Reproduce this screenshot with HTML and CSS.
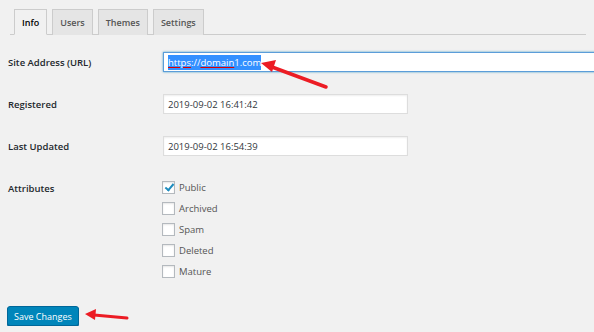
FILE: index.html
```html
<!DOCTYPE html>
<html lang="en">

<head>
    <meta charset="UTF-8">
    <title>Edit Site: Info</title>
    <link rel="stylesheet" href="styles.css">
</head>

<body>
    <div class="wrap">
        <h2 class="nav-tab-wrapper">
            <a class="nav-tab nav-tab-active" href="#">Info</a>
            <a class="nav-tab" href="#">Users</a>
            <a class="nav-tab" href="#">Themes</a>
            <a class="nav-tab" href="#">Settings</a>
        </h2>

        <div class="form-table">
            <div class="row">
                <div class="label">Site Address (URL)</div>
                <div class="field">
                    <div class="text-input wide focused"><span class="sel"><span class="typo">https</span>://<span class="typo">domain</span>1.com</span></div>
                </div>
            </div>
            <div class="row">
                <div class="label">Registered</div>
                <div class="field">
                    <div class="text-input">2019-09-02 16:41:42</div>
                </div>
            </div>
            <div class="row">
                <div class="label">Last Updated</div>
                <div class="field">
                    <div class="text-input">2019-09-02 16:54:39</div>
                </div>
            </div>
            <div class="row attributes">
                <div class="label">Attributes</div>
                <div class="field">
                    <label class="check"><span class="box checked"></span>Public</label>
                    <label class="check"><span class="box"></span>Archived</label>
                    <label class="check"><span class="box"></span>Spam</label>
                    <label class="check"><span class="box"></span>Deleted</label>
                    <label class="check"><span class="box"></span>Mature</label>
                </div>
            </div>
        </div>

        <p class="submit">
            <button class="button-primary">Save Changes</button>
        </p>
    </div>

    <!-- annotation arrows -->
    <svg class="arrows" width="594" height="332" viewBox="0 0 594 332">
        <line x1="326" y1="87" x2="272" y2="67" stroke="#ec1c24" stroke-width="3.5" stroke-linecap="round" />
        <polygon points="261,63 276,60 272,72" fill="#ec1c24" />
        <line x1="127" y1="318" x2="94" y2="315" stroke="#ec1c24" stroke-width="3" stroke-linecap="round" />
        <polygon points="85,314 96,309 95,320" fill="#ec1c24" />
    </svg>
</body>

</html>
```

FILE: styles.css
```css
body {
    margin: 0;
    overflow: hidden;
    background-color: #f1f1f1;
    font-family: "Open Sans", Arial, sans-serif;
    font-size: 9.5px;
    color: #23282d;
}

.wrap {
    padding: 0 8px;
}

.nav-tab-wrapper {
    display: flex;
    gap: 5px;
    margin: 0 0 0 2px;
    padding: 9px 0 0 4px;
    height: 25px;
    border-bottom: 1px solid #ccc;
    font-size: 9px;
    font-weight: 600;
}

.nav-tab {
    display: flex;
    align-items: center;
    padding: 0 7px;
    margin-bottom: -1px;
    border: 1px solid #ccc;
    border-bottom: none;
    background-color: #e5e5e5;
    color: #555;
    text-decoration: none;
}

.nav-tab-active {
    background-color: #f1f1f1;
    border-bottom: 1px solid #f1f1f1;
    color: #000;
}

.form-table {
    margin-top: 17px;
}

.row {
    display: flex;
    align-items: center;
    margin-bottom: 22px;
}

.label {
    flex-shrink: 0;
    width: 155px;
    font-weight: 600;
    color: #23282d;
}

.field {
    flex: 1;
}

.text-input {
    box-sizing: border-box;
    width: 245px;
    height: 20px;
    padding: 0 4px;
    display: flex;
    align-items: center;
    background-color: #fff;
    border: 1px solid #ddd;
    box-shadow: inset 0 1px 2px rgba(0, 0, 0, 0.07);
    color: #32373c;
}

.text-input.wide {
    width: 440px;
}

.focused {
    border-color: #5b9dd9;
    box-shadow: 0 0 2px rgba(30, 140, 190, 0.8);
}

.sel {
    background-color: #3390ff;
    color: #fff;
    padding: 1px 0;
}

.typo {
    text-decoration: underline solid #d00;
    text-decoration-thickness: 1px;
    text-underline-offset: 1px;
}

.attributes {
    align-items: flex-start;
    margin-top: 25px;
    margin-bottom: 0;
}

.attributes .label {
    padding-top: 1px;
}

.check {
    display: flex;
    align-items: center;
    height: 21px;
    margin-top: -4px;
    margin-bottom: 4px;
    color: #555;
}

.box {
    box-sizing: border-box;
    width: 13px;
    height: 13px;
    margin: 0 4px 0 -1px;
    background-color: #fff;
    border: 1px solid #b4b9be;
    box-shadow: inset 0 1px 2px rgba(0, 0, 0, 0.1);
    position: relative;
}

.box.checked::after {
    content: "";
    position: absolute;
    left: 4px;
    top: 0px;
    width: 3px;
    height: 7px;
    border: solid #1e8cbe;
    border-width: 0 2px 2px 0;
    transform: rotate(40deg);
}

.submit {
    margin: 20px 0 0 -1px;
}

.button-primary {
    height: 20px;
    padding: 0 6px;
    background-color: #0085ba;
    border: 1px solid #006799;
    border-radius: 3px;
    box-shadow: 0 1px 0 #006799;
    color: #fff;
    font-family: "Open Sans", Arial, sans-serif;
    font-size: 9px;
    cursor: pointer;
}

.arrows {
    position: absolute;
    left: 0;
    top: 0;
    pointer-events: none;
}
```
